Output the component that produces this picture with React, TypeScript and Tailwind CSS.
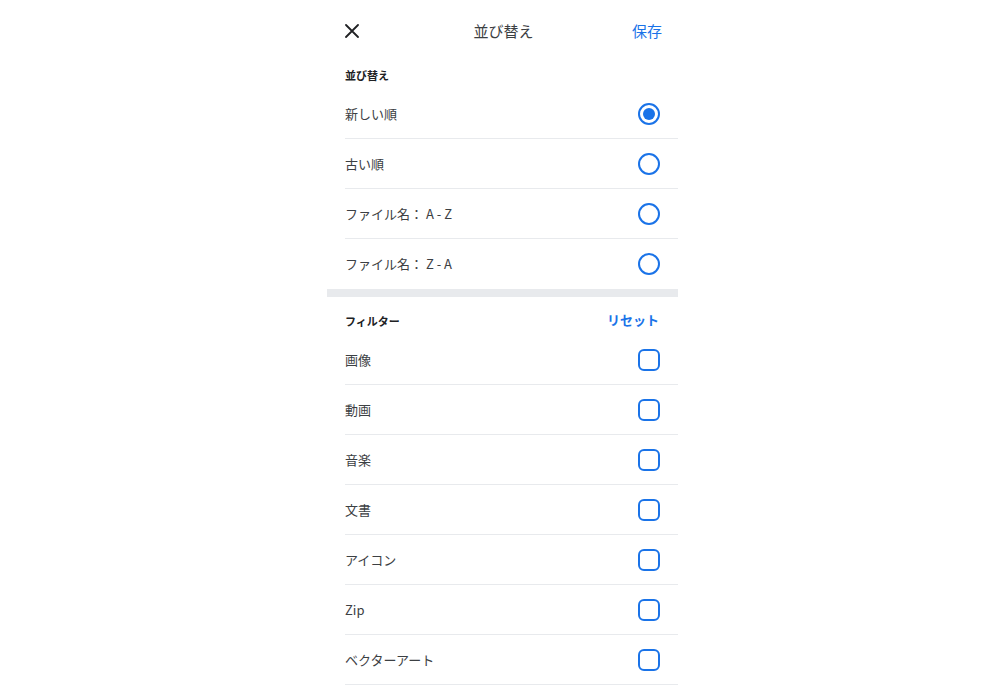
import { useState } from "react";

const sortOptions = ["新しい順", "古い順", "ファイル名： A - Z", "ファイル名： Z - A"];
const filterOptions = ["画像", "動画", "音楽", "文書", "アイコン", "Zip", "ベクターアート"];

function Radio({ checked }: { checked: boolean }) {
  return (
    <span className="flex h-[22px] w-[22px] items-center justify-center rounded-full border-2 border-[#1a73e8]">
      {checked && <span className="h-[12px] w-[12px] rounded-full bg-[#1a73e8]" />}
    </span>
  );
}

function Checkbox({ checked }: { checked: boolean }) {
  return (
    <span className="flex h-[22px] w-[22px] items-center justify-center rounded-[6px] border-2 border-[#1a73e8]">
      {checked && <span className="h-[10px] w-[10px] rounded-sm bg-[#1a73e8]" />}
    </span>
  );
}

export default function App() {
  const [sort, setSort] = useState(0);
  const [filters, setFilters] = useState<string[]>([]);

  const toggle = (f: string) =>
    setFilters((prev) => (prev.includes(f) ? prev.filter((x) => x !== f) : [...prev, f]));

  return (
    <div
      className="min-h-screen w-full bg-white pl-[15px] text-[#3c4043]"
      style={{ fontFamily: '"Noto Sans CJK JP", "Noto Sans", sans-serif' }}
    >
      <div className="mx-auto w-[351px]">
        <header className="grid h-[62px] grid-cols-[1fr_auto_1fr] items-center pl-[18px] pr-[16px]">
          <button className="justify-self-start text-[#202124]">
            <svg width="14" height="14" viewBox="0 0 14 14" fill="none" stroke="currentColor" strokeWidth="1.8" strokeLinecap="round">
              <path d="M1 1 L13 13 M13 1 L1 13" />
            </svg>
          </button>
          <h1 className="text-[15px] text-[#3c4043]">並び替え</h1>
          <button className="justify-self-end text-[15px] text-[#1a73e8]">保存</button>
        </header>

        <div className="flex h-[27px] items-center pl-[18px] text-[11px] font-bold text-[#202124]">並び替え</div>
        <ul className="pl-[18px]">
          {sortOptions.map((o, i) => (
            <li
              key={o}
              onClick={() => setSort(i)}
              className={`flex h-[50px] cursor-pointer items-center justify-between pr-[18px] ${i < sortOptions.length - 1 ? "border-b border-[#e8eaed]" : ""}`}
            >
              <span className="text-[13px]">{o}</span>
              <Radio checked={sort === i} />
            </li>
          ))}
        </ul>

        <div className="h-[8px] bg-[#e8eaed]" />

        <div className="flex h-[38px] items-end justify-between pb-[6px] pl-[18px] pr-[19px]">
          <span className="text-[11px] font-bold text-[#202124]">フィルター</span>
          <button className="text-[13px] font-bold text-[#1a73e8]">リセット</button>
        </div>
        <ul className="pl-[18px]">
          {filterOptions.map((f) => (
            <li
              key={f}
              onClick={() => toggle(f)}
              className="flex h-[50px] cursor-pointer items-center justify-between border-b border-[#e8eaed] pr-[18px]"
            >
              <span className="text-[13px]">{f}</span>
              <Checkbox checked={filters.includes(f)} />
            </li>
          ))}
        </ul>
      </div>
    </div>
  );
}
